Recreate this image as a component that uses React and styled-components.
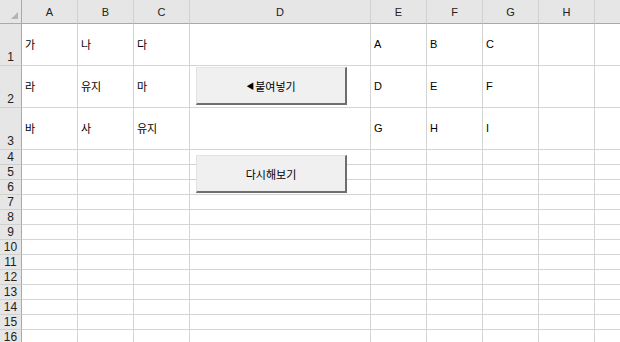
import React from "react";
import styled, { createGlobalStyle } from "styled-components";

const Global = createGlobalStyle`
  html, body { margin: 0; padding: 0; background: #fff; overflow: hidden; }
  body { font-family: "Liberation Sans", "Noto Sans CJK KR", sans-serif; }
`;

const Sheet = styled.div`
  position: relative;
  width: 620px;
  height: 342px;
  overflow: hidden;
  display: grid;
  grid-template-columns: 22px 56px 56px 56px 181px 56px 56px 56px 56px 56px;
  grid-template-rows: 24px 42px 42px 42px repeat(13, 15px);
  font-size: 11px;
  color: #000;
`;

const Corner = styled.div`
  position: relative;
  background: #e6e6e6;
  border-right: 1px solid #a9a9a9;
  border-bottom: 1px solid #a9a9a9;
  &::after {
    content: "";
    position: absolute;
    right: 3px;
    bottom: 4px;
    width: 0;
    height: 0;
    border-left: 7px solid transparent;
    border-bottom: 7px solid #b4b4b4;
  }
`;

const ColHead = styled.div`
  background: #e6e6e6;
  border-right: 1px solid #d0d0d0;
  border-bottom: 1px solid #a9a9a9;
  display: flex;
  align-items: center;
  justify-content: center;
  color: #222;
  padding-top: 1px;
`;

const RowHead = styled.div`
  background: #e6e6e6;
  border-right: 1px solid #a9a9a9;
  border-bottom: 1px solid #d0d0d0;
  display: flex;
  align-items: ${(p) => (p.$tall ? "flex-end" : "center")};
  justify-content: center;
  padding-bottom: ${(p) => (p.$tall ? "1px" : "0")};
  color: #222;
  font-size: 12px;
  line-height: 14px;
`;

const Cell = styled.div`
  border-right: 1px solid #d4d4d4;
  border-bottom: 1px solid #d4d4d4;
  display: flex;
  align-items: center;
  padding-left: 3px;
  padding-bottom: 1px;
  white-space: nowrap;
  overflow: visible;
`;

const SheetButton = styled.button`
  position: absolute;
  left: 196px;
  top: ${(p) => p.$top}px;
  width: 151px;
  height: 38px;
  box-sizing: border-box;
  background: #f0f0f0;
  border: none;
  border-top: 1px solid #e2e2e2;
  border-left: 1px solid #e2e2e2;
  border-right: 2px solid #6e6e6e;
  border-bottom: 2px solid #6e6e6e;
  padding: 0;
  font-family: "Noto Sans CJK KR", sans-serif;
  font-size: 11px;
  color: #000;
  display: flex;
  align-items: center;
  justify-content: center;
`;

const Arrow = styled.span`
  font-size: 8px;
  margin-right: 1px;
`;

const cols = ["A", "B", "C", "D", "E", "F", "G", "H", ""];
const data = [
  ["가", "나", "다", "", "A", "B", "C", "", ""],
  ["라", "유지", "마", "", "D", "E", "F", "", ""],
  ["바", "사", "유지", "", "G", "H", "I", "", ""],
];

export default function App() {
  const rows = [];
  for (let r = 1; r <= 16; r++) {
    const tall = r <= 3;
    rows.push(
      <RowHead key={"h" + r} $tall={tall}>
        {r}
      </RowHead>
    );
    cols.forEach((c, i) => {
      rows.push(<Cell key={r + "-" + i}>{tall ? data[r - 1][i] : ""}</Cell>);
    });
  }
  return (
    <>
      <Global />
      <Sheet>
        <Corner />
        {cols.map((c, i) => (
          <ColHead key={"c" + i}>{c}</ColHead>
        ))}
        {rows}
        <SheetButton $top={67}>
          <Arrow>◀</Arrow>붙여넣기
        </SheetButton>
        <SheetButton $top={155}>다시해보기</SheetButton>
      </Sheet>
    </>
  );
}
